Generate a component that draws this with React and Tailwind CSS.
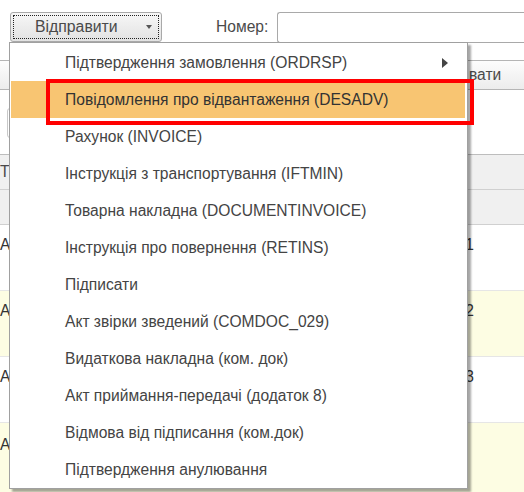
import React from "react";

const items = [
  "Підтвердження замовлення (ORDRSP)",
  "Повідомлення про відвантаження (DESADV)",
  "Рахунок (INVOICE)",
  "Інструкція з транспортування (IFTMIN)",
  "Товарна накладна (DOCUMENTINVOICE)",
  "Інструкція про повернення (RETINS)",
  "Підписати",
  "Акт звірки зведений (COMDOC_029)",
  "Видаткова накладна (ком. док)",
  "Акт приймання-передачі (додаток 8)",
  "Відмова від підписання (ком.док)",
  "Підтвердження анулювання",
];

export default function App() {
  return (
    <div
      className="relative w-[524px] h-[492px] overflow-hidden bg-white text-[#3a3a3a]"
      style={{ fontFamily: '"Liberation Sans", Arial, sans-serif' }}
    >
      {/* Top bar */}
      <div className="flex items-center h-[54px] pt-[12px] pb-[12px] pl-[10px]">
        <div className="relative w-[152px] h-[30px] rounded-[3px] border border-[#a9a9a9] bg-gradient-to-b from-[#f7f7f7] to-[#e2e2e2] p-[2px]">
          <div className="flex items-center h-full border border-dotted border-[#222] text-[15.8px] text-[#4a4a4a]">
            <span className="pl-[21px]">Відправити</span>
            <span className="ml-auto mr-[6px] w-0 h-0 border-l-[3px] border-r-[3px] border-t-[4px] border-l-transparent border-r-transparent border-t-[#555]" />
          </div>
        </div>
        <span className="ml-[54px] text-[15.6px] text-[#4a4a4a]">Номер:</span>
        <div className="ml-[9px] flex-1 h-[31px] border border-[#a9a9a9] rounded-l-[3px] border-r-0" />
      </div>
      {/* toolbar row */}
      <div className="h-[6px]" />
      <div className="flex items-center h-[30px] border-t border-b border-[#b5b5b5] bg-gradient-to-b from-[#fdfdfd] to-[#ececec]">
        <span className="ml-[469px] text-[15.6px] text-[#4a4a4a] whitespace-nowrap">вати</span>
      </div>
      {/* search area */}
      <div className="h-[64px] pt-[18px]">
        <div className="ml-[7px] w-[60px] h-[30px] border border-[#c8c8c8] rounded-[3px]" />
      </div>
      {/* table header */}
      <div className="border-t border-[#bdbdbd]">
        <div className="h-[35px] bg-[#f0f0f0] border-b border-[#d0d0d0] flex items-center text-[15.6px] text-[#4a4a4a]">
          <span>Ти</span>
        </div>
        <div className="h-[35px] bg-[#f0f0f0] border-b border-[#d0d0d0]" />
      </div>
      {/* rows */}
      <div className="h-[66px] bg-white border-b border-[#e6e6e6] flex items-start pt-[8px] text-[15.6px] text-[#333]">
        <span>Ак</span>
        <span className="ml-auto mr-[50px]">1</span>
      </div>
      <div className="h-[66px] bg-[#fdfde3] border-b border-[#e6e6e6] flex items-start pt-[8px] text-[15.6px] text-[#333]">
        <span>Ак</span>
        <span className="ml-auto mr-[50px]">2</span>
      </div>
      <div className="h-[66px] bg-white border-b border-[#e6e6e6] flex items-start pt-[8px] text-[15.6px] text-[#333]">
        <span>Ак</span>
        <span className="ml-auto mr-[50px]">3</span>
      </div>
      <div className="h-[80px] bg-[#fdfde3] flex items-start pt-[10px] text-[15.6px] text-[#333]">
        <span>Ак</span>
      </div>

      {/* dropdown menu */}
      <div className="absolute left-[9px] top-[42px] w-[459px] h-[447px] bg-white border border-[#a0a0a0] shadow-[3px_3px_2px_rgba(0,0,0,0.35)] pt-[1px] pl-[1px] pr-[2px]">
        {items.map((t, i) => (
          <div
            key={i}
            className={
              "relative flex items-center h-[37px] pl-[54px] text-[15.6px] whitespace-nowrap " +
              (i === 1 ? "bg-[#f8c572] text-[#333]" : "text-[#444]")
            }
          >
            {t}
            {i === 0 && (
              <span className="absolute right-[17px] w-0 h-0 border-t-[5px] border-b-[5px] border-l-[6px] border-t-transparent border-b-transparent border-l-[#444]" />
            )}
          </div>
        ))}
      </div>
      {/* red highlight frame */}
      <div className="absolute left-[46px] top-[79px] w-[428px] h-[46px] border-[4px] border-[#ff0000]" />
    </div>
  );
}
